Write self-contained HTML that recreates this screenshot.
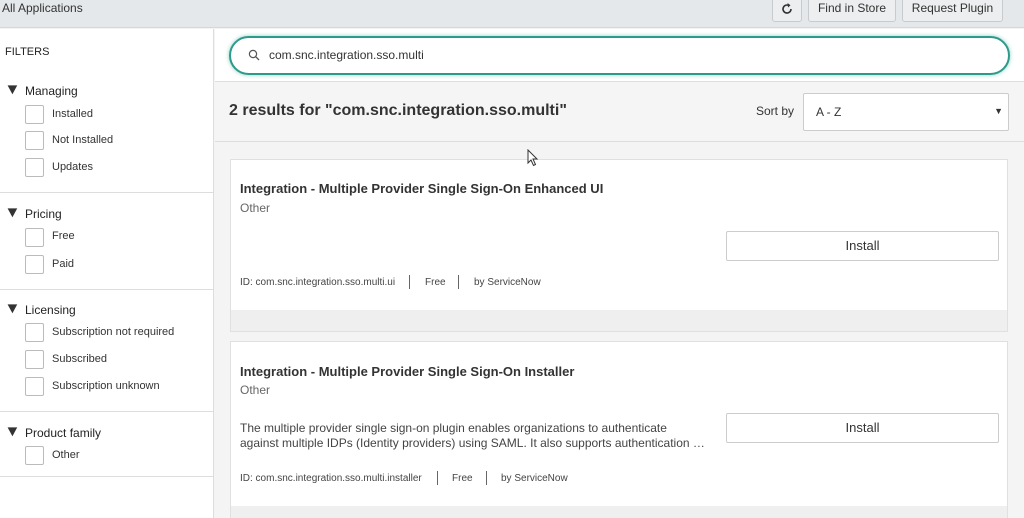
<!DOCTYPE html><html><head><style>
*{box-sizing:border-box;margin:0;padding:0}
html{width:1024px;height:518px;overflow:hidden}
body{width:1024px;height:518px;overflow:hidden;font-family:"Liberation Sans",sans-serif;color:#333;background:#f4f4f4;position:relative;font-size:11px}
.abs{position:absolute}
.top{left:0;top:0;width:1024px;height:28px;background:#e5e8ea;border-bottom:1px solid #d5d8da}
.btn{top:-4px;height:26px;background:#eceeef;border:1px solid #c8cbcd;border-radius:3px;font-size:12px;color:#333;text-align:center;line-height:22px}
.side{left:0;top:29px;width:214px;height:489px;background:#fff;border-right:1px solid #ddd}
.hd{font-size:12px;color:#222;font-weight:normal}
.cb{width:19px;height:19px;border:1px solid #bbb;border-radius:2px;left:25px}
.lbl{left:52px;font-size:11px;color:#333}
.tri{left:5px;font-size:15px;line-height:15px;transform:scaleX(1.1)}
.div{left:0;width:214px;height:1px;background:#ddd}
.card{left:230px;width:778px;background:#fff;border:1px solid #e0e0e0}
.inst{width:273px;height:30px;border:1px solid #ccc;border-radius:2px;background:#fff;font-size:13px;text-align:center;line-height:28px;color:#333}
.meta{font-size:10px;color:#444}
.sep{width:1px;height:14px;background:#666}
</style></head><body>
<div class="abs top"><div class="abs" style="left:2px;top:1px;font-size:12px;color:#333">All Applications</div></div>
<div class="abs btn" style="left:772px;width:30px"><svg width="14" height="14" viewBox="0 0 14 14" style="margin-top:5px"><path d="M11 7A4 4 0 1 1 8.5 3.3" fill="none" stroke="#333" stroke-width="1.6"/><path d="M7.5 1L10.5 3.2L8 5.5Z" fill="#333"/></svg></div>
<div class="abs btn" style="left:808px;width:88px">Find in Store</div>
<div class="abs btn" style="left:902px;width:101px">Request Plugin</div>
<div class="abs side"></div>
<div class="abs hd" style="left:5px;top:46px;font-size:11px">FILTERS</div>
<div class="abs tri" style="top:82px">▼</div><div class="abs hd" style="left:25px;top:84px">Managing</div>
<div class="abs cb" style="top:105px"></div><div class="abs lbl" style="top:108px">Installed</div>
<div class="abs cb" style="top:131px"></div><div class="abs lbl" style="top:134px">Not Installed</div>
<div class="abs cb" style="top:158px"></div><div class="abs lbl" style="top:161px">Updates</div>
<div class="abs div" style="top:192px"></div>
<div class="abs tri" style="top:205px">▼</div><div class="abs hd" style="left:25px;top:207px">Pricing</div>
<div class="abs cb" style="top:228px"></div><div class="abs lbl" style="top:230px">Free</div>
<div class="abs cb" style="top:255px"></div><div class="abs lbl" style="top:258px">Paid</div>
<div class="abs div" style="top:289px"></div>
<div class="abs tri" style="top:301px">▼</div><div class="abs hd" style="left:25px;top:303px">Licensing</div>
<div class="abs cb" style="top:323px"></div><div class="abs lbl" style="top:326px">Subscription not required</div>
<div class="abs cb" style="top:350px"></div><div class="abs lbl" style="top:353px">Subscribed</div>
<div class="abs cb" style="top:377px"></div><div class="abs lbl" style="top:380px">Subscription unknown</div>
<div class="abs div" style="top:411px"></div>
<div class="abs tri" style="top:424px">▼</div><div class="abs hd" style="left:25px;top:426px">Product family</div>
<div class="abs cb" style="top:446px"></div><div class="abs lbl" style="top:449px">Other</div>
<div class="abs div" style="top:476px"></div>
<div class="abs" style="left:215px;top:29px;width:809px;height:53px;background:#fff;border-bottom:1px solid #ddd"></div>
<div class="abs" style="left:229px;top:36px;width:781px;height:39px;border:2px solid #2e9a8a;border-radius:20px;background:#fff;box-shadow:0 0 4px #8ccfc4"></div>
<svg class="abs" style="left:248px;top:49px" width="12" height="12" viewBox="0 0 12 12"><circle cx="5" cy="5" r="3.6" fill="none" stroke="#555" stroke-width="1.2"/><path d="M7.6 7.6L11 11" stroke="#555" stroke-width="1.3"/></svg>
<div class="abs" style="left:269px;top:48px;font-size:12px;color:#333">com.snc.integration.sso.multi</div>
<div class="abs" style="left:215px;top:82px;width:809px;height:60px;background:#f5f5f5;border-bottom:1px solid #ddd"></div>
<div class="abs" style="left:229px;top:102px;font-size:16px;font-weight:bold;color:#333">2 results for "com.snc.integration.sso.multi"</div>
<div class="abs" style="left:756px;top:104px;font-size:12px">Sort by</div>
<div class="abs" style="left:803px;top:93px;width:206px;height:38px;background:#fff;border:1px solid #ccc;border-radius:2px"><span class="abs" style="left:12px;top:11px;font-size:12px">A - Z</span><span class="abs" style="right:5px;top:12px;font-size:9px">▼</span></div>
<div class="abs card" style="top:159px;height:173px"><div class="abs" style="left:0;bottom:0;width:100%;height:21px;background:#efefef"></div></div>
<div class="abs" style="left:240px;top:181px;font-size:13px;font-weight:bold;color:#333">Integration - Multiple Provider Single Sign-On Enhanced UI</div>
<div class="abs" style="left:240px;top:201px;font-size:12px;color:#666">Other</div>
<div class="abs inst" style="left:726px;top:231px">Install</div>
<div class="abs meta" style="left:240px;top:277px">ID: com.snc.integration.sso.multi.ui</div>
<div class="abs sep" style="left:409px;top:275px"></div>
<div class="abs meta" style="left:425px;top:277px">Free</div>
<div class="abs sep" style="left:458px;top:275px"></div>
<div class="abs meta" style="left:474px;top:277px">by ServiceNow</div>
<div class="abs card" style="top:341px;height:177px"><div class="abs" style="left:0;top:164px;width:100%;height:20px;background:#efefef"></div></div>
<div class="abs" style="left:240px;top:364px;font-size:13px;font-weight:bold;color:#333">Integration - Multiple Provider Single Sign-On Installer</div>
<div class="abs" style="left:240px;top:383px;font-size:12px;color:#666">Other</div>
<div class="abs" style="left:240px;top:421px;width:462px;font-size:12px;line-height:15px;color:#444;white-space:nowrap">The multiple provider single sign-on plugin enables organizations to authenticate<br>against multiple IDPs (Identity providers) using SAML. It also supports authentication …</div>
<div class="abs inst" style="left:726px;top:413px">Install</div>
<div class="abs meta" style="left:240px;top:473px">ID: com.snc.integration.sso.multi.installer</div>
<div class="abs sep" style="left:437px;top:471px"></div>
<div class="abs meta" style="left:452px;top:473px">Free</div>
<div class="abs sep" style="left:486px;top:471px"></div>
<div class="abs meta" style="left:501px;top:473px">by ServiceNow</div>
<svg class="abs" style="left:527px;top:149px" width="12" height="18" viewBox="0 0 12 18"><path d="M1 1L1 14L4 11L6.5 16.5L8.5 15.5L6 10L10 10Z" fill="#fff" stroke="#333" stroke-width="1"/></svg>
</body></html>
